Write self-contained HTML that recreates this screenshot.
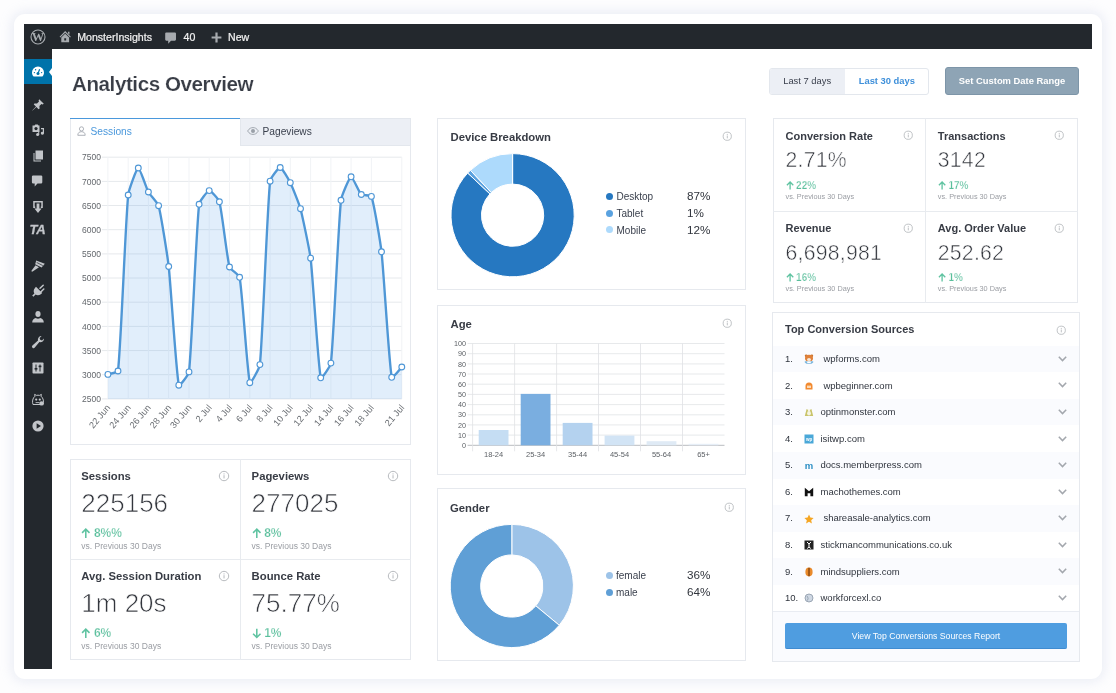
<!DOCTYPE html>
<html><head><meta charset="utf-8"><title>Analytics Overview</title>
<style>
html,body{margin:0;padding:0}
body{width:1116px;height:693px;overflow:hidden;background:#fdfdfe;font-family:'Liberation Sans', 'DejaVu Sans', sans-serif;position:relative;color:#393f4c}
.abs{position:absolute}
svg{display:block;overflow:visible}
svg text{font-family:'Liberation Sans', 'DejaVu Sans', sans-serif}
#card{left:14px;top:14px;width:1088px;height:665px;border-radius:11px;background:#fff;box-shadow:0 0 12px 2px rgba(228,231,243,0.8)}
#app{left:24px;top:24px;width:1068px;height:644px;background:#fff;overflow:hidden}
#topbar{left:24px;top:24px;width:1068px;height:25px;background:#23282d}
#side{left:24px;top:49px;width:28px;height:619.6px;background:#23282d}
#active{left:24px;top:59px;width:28px;height:25px;background:#0073aa}
.tb{color:#f1f1f1;font-size:10.6px;top:30.9px;white-space:nowrap;-webkit-text-stroke:0.22px #f1f1f1}
h1{margin:0;left:72px;top:72px;font-size:20.6px;font-weight:bold;color:#393d46;white-space:nowrap;letter-spacing:-0.43px;-webkit-text-stroke:0.15px #fff}
.panel{border:1px solid #e6e9ee;background:#fff;box-sizing:border-box}
.pt{font-size:11.3px;font-weight:bold;color:#383c45;white-space:nowrap}
.lbl{font-weight:bold;color:#383c45;white-space:nowrap}
.num{color:#33363d;white-space:nowrap;-webkit-text-stroke:0.55px #fff}
.dl{font-weight:bold;color:#5abf9c;white-space:nowrap;-webkit-text-stroke:0.25px #fff}
.dl .ar{display:inline-block;width:11px;font-weight:bold}
.vs{color:#9a9da3;white-space:nowrap}
.row{font-size:9.5px;color:#30353e;white-space:nowrap}
.lg{font-size:10px;color:#393f4c;white-space:nowrap}
.lgp{font-size:11.7px;color:#30343c;white-space:nowrap}
.dot{width:7px;height:7px;border-radius:50%}
.vline{width:1px;background:#e8ebef}
.hline{height:1px;background:#e8ebef}
</style></head><body>
<div id="root" class="abs" style="left:0;top:0;width:1116px;height:693px;will-change:transform">
<div id="card" class="abs"></div>
<div id="topbar" class="abs"></div>
<div id="side" class="abs"></div>
<div id="active" class="abs"></div>
<div class="abs" style="left:48.5px;top:67.5px;width:0;height:0;border:4px solid transparent;border-right:3.5px solid #fff;border-left-width:0"></div>

<!-- topbar -->
<svg class="abs" style="left:29.7px;top:29.1px" width="16" height="16" viewBox="0 0 16 16"><circle cx="8" cy="8" r="7" fill="none" stroke="#a7abaf" stroke-width="1.1"/><text x="8" y="12.3" style="font-family:'Liberation Serif',serif;font-weight:bold;font-size:12.5px" text-anchor="middle" fill="#a7abaf">W</text></svg>
<svg class="abs" style="left:58.7px;top:30.3px" width="12.4" height="13.4" viewBox="0 0 13 13" preserveAspectRatio="none"><path d="M6.5 1 L12.4 6.6 L11.6 7.4 L6.5 2.7 L1.4 7.4 L0.6 6.6 Z" fill="#a7abaf"/><path d="M9.4 1.6 h1.6 v3 l-1.6-1.5z" fill="#a7abaf"/><path d="M2.4 7.4 L6.5 3.7 L10.6 7.4 V12 H2.4 Z M5.5 8 v2.2 h2 V8z" fill="#a7abaf" fill-rule="evenodd"/></svg>
<div class="abs tb" style="left:77.2px">MonsterInsights</div>
<svg class="abs" style="left:165.4px;top:31.6px" width="11.4" height="12" viewBox="0 0 11.4 12"><path d="M1.3 0.5 h8.6 a1.1 1.1 0 0 1 1.1 1.1 v6 a1.1 1.1 0 0 1 -1.1 1.1 h-3.9 l-2.8 3.1 v-3.1 h-1.9 a1.1 1.1 0 0 1 -1.1 -1.1 v-6 a1.1 1.1 0 0 1 1.1 -1.1z" fill="#a7abaf"/></svg>
<div class="abs tb" style="left:183.5px">40</div>
<svg class="abs" style="left:210.6px;top:32.2px" width="11" height="11" viewBox="0 0 11 11"><path d="M4.4 0.6 h2.2 v3.8 h3.8 v2.2 h-3.8 v3.8 h-2.2 v-3.8 h-3.8 v-2.2 h3.8z" fill="#a7abaf"/></svg>
<div class="abs tb" style="left:228px">New</div>

<svg class="abs" style="left:31.0px;top:64.5px" width="14" height="14" viewBox="0 0 14 14"><path d="M7 1.5 A6 6 0 0 0 1 7.5 c0 1.6 0.6 3 1.6 4 h8.8 c1-1 1.6-2.4 1.6-4 A6 6 0 0 0 7 1.5z" fill="#fff"/><circle cx="7" cy="8.6" r="1.5" fill="#0073aa"/><path d="M7 8.6 L8.6 4.2" stroke="#0073aa" stroke-width="1.2"/><circle cx="3.4" cy="7.6" r="0.7" fill="#0073aa"/><circle cx="4.6" cy="4.8" r="0.7" fill="#0073aa"/><circle cx="10.6" cy="7.6" r="0.7" fill="#0073aa"/></svg>
<svg class="abs" style="left:31.0px;top:97.5px" width="14" height="14" viewBox="0 0 14 14"><path d="M8.2 1.2 L12.8 5.8 L11.6 6.4 L10.4 6 L8.4 8 L8.6 10.6 L7.6 11.2 L5.4 9 L1.6 12.6 L1.2 12.4 L5 8.6 L2.8 6.4 L3.4 5.4 L6 5.6 L8 3.6 L7.6 2.4 Z" fill="#c2c5c9"/></svg>
<svg class="abs" style="left:31.0px;top:123.0px" width="14" height="14" viewBox="0 0 14 14"><path d="M1.5 2.5 h2 l0.8-1 h2.4 l0.8 1 h1 v6.5 h-7z" fill="#c2c5c9"/><circle cx="5" cy="5.6" r="1.6" fill="#23282d"/><path d="M10 5 h3 v5.2 a1.6 1.4 0 1 1 -1.2 -1.3 v-2.7 h-1.8z" fill="#c2c5c9"/><circle cx="6.6" cy="11.6" r="1.5" fill="#c2c5c9"/><rect x="7.2" y="9" width="1" height="2.8" fill="#c2c5c9"/></svg>
<svg class="abs" style="left:31.0px;top:148.5px" width="14" height="14" viewBox="0 0 14 14"><path d="M4.5 1.5 h7.5 v9 h-7.5z" fill="#c2c5c9"/><path d="M2.5 4 h1 v7.5 h6.5 v1 h-7.5z" fill="#c2c5c9"/></svg>
<svg class="abs" style="left:31.0px;top:174.3px" width="14" height="14" viewBox="0 0 14 14"><path transform="translate(-0.9 0)" d="M3 1.4 h8 a1.2 1.2 0 0 1 1.2 1.2 v5.6 a1.2 1.2 0 0 1 -1.2 1.2 h-3.6 l-2.8 3.2 v-3.2 h-1.6 a1.2 1.2 0 0 1 -1.2 -1.2 v-5.6 a1.2 1.2 0 0 1 1.2 -1.2z" fill="#c2c5c9"/></svg>
<svg class="abs" style="left:31.0px;top:199.5px" width="14" height="14" viewBox="0 0 14 14"><path d="M2.2 0.9 h9.6 v7 h-2 v-1.5 h0.5 v-4 h-6.6 v4 h0.5 v1.5 h-2z" fill="#c2c5c9"/><path d="M5.6 3.6 h2.8 v5 h2.2 l-3.6 4.4 l-3.6-4.4 h2.2z" fill="#c2c5c9"/></svg>
<div class="abs" style="left:29.6px;top:222.3px;font:italic bold 13px 'Liberation Sans', 'DejaVu Sans', sans-serif;color:#c2c5c9;letter-spacing:-0.2px;-webkit-text-stroke:0.3px #c2c5c9">TA</div>
<svg class="abs" style="left:30.6px;top:259.6px" width="14" height="12" viewBox="0 0 14 12"><path d="M5.2 0.6 L13.8 3.8 L10.6 7.6 L4.2 4.2 Z" fill="#c2c5c9"/><path d="M5.6 2.4 L11.8 5.6" stroke="#23282d" stroke-width="0.7"/><path d="M4.6 5.2 L8 7.2 L1.6 11.6 C0.8 12 0.1 11.3 0.6 10.6 Z" fill="#c2c5c9"/></svg>
<svg class="abs" style="left:31.0px;top:284.0px" width="14" height="14" viewBox="0 0 14 14"><path d="M12.2 1.2 L9 4.2 M12.8 5 L9.8 8" stroke="#c2c5c9" stroke-width="1.5" stroke-linecap="round"/><path d="M5 2.8 L11.2 9 L9.8 10.2 C8.2 11.6 6 11.6 4.6 10.6 L2.4 12.8 L1.2 11.6 L3.4 9.4 C2.4 8 2.4 5.8 3.8 4.2z" fill="#c2c5c9"/></svg>
<svg class="abs" style="left:31.0px;top:309.5px" width="14" height="14" viewBox="0 0 14 14"><ellipse cx="7" cy="4" rx="2.6" ry="3" fill="#c2c5c9"/><path d="M1.2 12.6 c0-2.8 1.6-4 3.6-4.6 c1.2 1 3.2 1 4.4 0 c2 0.6 3.6 1.8 3.6 4.6z" fill="#c2c5c9"/></svg>
<svg class="abs" style="left:31.0px;top:335.0px" width="14" height="14" viewBox="0 0 14 14"><path d="M13 3.4 a3.6 3.6 0 0 1 -4.6 3.6 L3.8 12.6 a1.6 1.6 0 0 1 -2.4 -2.2 L7 5.6 a3.6 3.6 0 0 1 3.6 -4.6 L8.6 3 L9.2 4.8 L11 5.4z" fill="#c2c5c9"/></svg>
<svg class="abs" style="left:31.0px;top:360.5px" width="14" height="14" viewBox="0 0 14 14"><rect x="1.5" y="1.5" width="11" height="11" rx="0.8" fill="#c2c5c9"/><path d="M5 3.5 v7 M9 3.5 v7" stroke="#23282d" stroke-width="1"/><rect x="3.6" y="7" width="2.8" height="1.6" fill="#23282d"/><rect x="7.6" y="4.6" width="2.8" height="1.6" fill="#23282d"/></svg>
<svg class="abs" style="left:30.5px;top:392.5px" width="15" height="15" viewBox="0 0 15 15"><path d="M2 11.5 C1 9 1.5 5 4 3.2 L3.6 1.4 L5.6 2.4 C6.5 2.1 7.5 2.1 8.4 2.4 L10.4 1.4 L10 3.2 C12.5 5 13 9 12 11.5z" fill="none" stroke="#c2c5c9" stroke-width="1"/><circle cx="5.2" cy="6.6" r="1.1" fill="#c2c5c9"/><circle cx="8.8" cy="6.6" r="1.1" fill="#c2c5c9"/><circle cx="10.6" cy="10.4" r="2.2" fill="#c2c5c9"/><path d="M4.6 9.6 h4" stroke="#c2c5c9" stroke-width="0.9"/></svg>
<svg class="abs" style="left:31.0px;top:419.0px" width="14" height="14" viewBox="0 0 14 14"><circle cx="7" cy="7" r="5.6" fill="#c2c5c9"/><path d="M5.6 4.2 L10 7 L5.6 9.8z" fill="#23282d"/></svg>

<h1 class="abs">Analytics Overview</h1>

<!-- date buttons -->
<div class="abs" style="left:769px;top:67.8px;width:160px;height:27px;box-sizing:border-box;border:1px solid #e3e7ed;border-radius:3px;background:#fff"></div>
<div class="abs" style="left:770px;top:68.8px;width:75px;height:25px;background:#eceff5;border-radius:2px 0 0 2px"></div>
<div class="abs" style="left:783.2px;top:75.2px;font-size:9.4px;color:#393f4c;white-space:nowrap">Last 7 days</div>
<div class="abs" style="left:858.7px;top:75.2px;font-size:9.4px;font-weight:bold;color:#3f90da;white-space:nowrap">Last 30 days</div>
<div class="abs" style="left:945px;top:67.3px;width:134px;height:27.5px;box-sizing:border-box;background:#8ea4b5;border:1px solid #7d95a8;border-radius:3px"></div>
<div class="abs" style="left:945px;top:75.2px;width:134px;text-align:center;font-size:9.4px;font-weight:bold;color:#fff;white-space:nowrap">Set Custom Date Range</div>

<!-- line chart panel -->
<div class="abs panel" style="left:70px;top:118px;width:341px;height:327px"></div>
<div class="abs" style="left:240px;top:118px;width:171px;height:28px;box-sizing:border-box;background:#eceff5;border:1px solid #e3e7ed"></div>
<div class="abs" style="left:70px;top:117.5px;width:170px;height:1.5px;background:#4a98dc"></div>
<svg class="abs" style="left:77px;top:126px" width="9" height="10" viewBox="0 0 9 10"><circle cx="4.5" cy="2.9" r="2.1" fill="none" stroke="#9aa0a8" stroke-width="0.8"/><path d="M0.8 9.3 c0-2.4 1.4-3.6 3.7-3.6 s3.7 1.2 3.7 3.6z" fill="none" stroke="#9aa0a8" stroke-width="0.8"/></svg>
<div class="abs" style="left:90.5px;top:125.5px;font-size:10.2px;color:#4a98dc;white-space:nowrap">Sessions</div>
<svg class="abs" style="left:246.5px;top:127px" width="12" height="8" viewBox="0 0 12 8"><path d="M0.6 4 C2.4 1.2 4.2 0.6 6 0.6 S9.6 1.2 11.4 4 C9.6 6.8 7.8 7.4 6 7.4 S2.4 6.8 0.6 4z" fill="none" stroke="#9aa0a8" stroke-width="0.9"/><circle cx="6" cy="4" r="2" fill="#9aa0a8"/></svg>
<div class="abs" style="left:262.5px;top:125.5px;font-size:10.2px;color:#393f4c;white-space:nowrap">Pageviews</div>
<svg class="abs" style="left:0;top:0" width="1116" height="693" viewBox="0 0 1116 693">
<line x1="101.9" y1="398.9" x2="401.8" y2="398.9" stroke="#e6e9ec" stroke-width="1"/>
<text x="100.9" y="402.1" text-anchor="end" font-size="8.5" fill="#63676c">2500</text>
<line x1="101.9" y1="374.7" x2="401.8" y2="374.7" stroke="#e6e9ec" stroke-width="1"/>
<text x="100.9" y="377.9" text-anchor="end" font-size="8.5" fill="#63676c">3000</text>
<line x1="101.9" y1="350.6" x2="401.8" y2="350.6" stroke="#e6e9ec" stroke-width="1"/>
<text x="100.9" y="353.8" text-anchor="end" font-size="8.5" fill="#63676c">3500</text>
<line x1="101.9" y1="326.4" x2="401.8" y2="326.4" stroke="#e6e9ec" stroke-width="1"/>
<text x="100.9" y="329.6" text-anchor="end" font-size="8.5" fill="#63676c">4000</text>
<line x1="101.9" y1="302.2" x2="401.8" y2="302.2" stroke="#e6e9ec" stroke-width="1"/>
<text x="100.9" y="305.4" text-anchor="end" font-size="8.5" fill="#63676c">4500</text>
<line x1="101.9" y1="278.0" x2="401.8" y2="278.0" stroke="#e6e9ec" stroke-width="1"/>
<text x="100.9" y="281.2" text-anchor="end" font-size="8.5" fill="#63676c">5000</text>
<line x1="101.9" y1="253.9" x2="401.8" y2="253.9" stroke="#e6e9ec" stroke-width="1"/>
<text x="100.9" y="257.1" text-anchor="end" font-size="8.5" fill="#63676c">5500</text>
<line x1="101.9" y1="229.7" x2="401.8" y2="229.7" stroke="#e6e9ec" stroke-width="1"/>
<text x="100.9" y="232.9" text-anchor="end" font-size="8.5" fill="#63676c">6000</text>
<line x1="101.9" y1="205.5" x2="401.8" y2="205.5" stroke="#e6e9ec" stroke-width="1"/>
<text x="100.9" y="208.7" text-anchor="end" font-size="8.5" fill="#63676c">6500</text>
<line x1="101.9" y1="181.4" x2="401.8" y2="181.4" stroke="#e6e9ec" stroke-width="1"/>
<text x="100.9" y="184.6" text-anchor="end" font-size="8.5" fill="#63676c">7000</text>
<line x1="101.9" y1="157.2" x2="401.8" y2="157.2" stroke="#e6e9ec" stroke-width="1"/>
<text x="100.9" y="160.4" text-anchor="end" font-size="8.5" fill="#63676c">7500</text>
<line x1="107.9" y1="157.2" x2="107.9" y2="398.9" stroke="#f1f3f6" stroke-width="1"/>
<line x1="128.2" y1="157.2" x2="128.2" y2="398.9" stroke="#f1f3f6" stroke-width="1"/>
<line x1="148.4" y1="157.2" x2="148.4" y2="398.9" stroke="#f1f3f6" stroke-width="1"/>
<line x1="168.7" y1="157.2" x2="168.7" y2="398.9" stroke="#f1f3f6" stroke-width="1"/>
<line x1="189.0" y1="157.2" x2="189.0" y2="398.9" stroke="#f1f3f6" stroke-width="1"/>
<line x1="209.2" y1="157.2" x2="209.2" y2="398.9" stroke="#f1f3f6" stroke-width="1"/>
<line x1="229.5" y1="157.2" x2="229.5" y2="398.9" stroke="#f1f3f6" stroke-width="1"/>
<line x1="249.8" y1="157.2" x2="249.8" y2="398.9" stroke="#f1f3f6" stroke-width="1"/>
<line x1="270.1" y1="157.2" x2="270.1" y2="398.9" stroke="#f1f3f6" stroke-width="1"/>
<line x1="290.3" y1="157.2" x2="290.3" y2="398.9" stroke="#f1f3f6" stroke-width="1"/>
<line x1="310.6" y1="157.2" x2="310.6" y2="398.9" stroke="#f1f3f6" stroke-width="1"/>
<line x1="330.9" y1="157.2" x2="330.9" y2="398.9" stroke="#f1f3f6" stroke-width="1"/>
<line x1="351.1" y1="157.2" x2="351.1" y2="398.9" stroke="#f1f3f6" stroke-width="1"/>
<line x1="371.4" y1="157.2" x2="371.4" y2="398.9" stroke="#f1f3f6" stroke-width="1"/>
<line x1="401.8" y1="157.2" x2="401.8" y2="398.9" stroke="#f1f3f6" stroke-width="1"/>
<path d="M107.9,374.4 C109.5,373.8 117.8,372.6 118.0,371.0 C121.1,343.9 125.4,222.9 128.2,195.0 C128.6,190.4 136.6,168.2 138.3,168.0 C139.8,167.8 146.5,188.4 148.4,192.0 C149.7,194.4 157.9,203.1 158.6,205.7 C161.1,215.1 167.6,256.8 168.7,266.5 C170.8,285.5 176.0,370.4 178.8,385.2 C179.2,387.2 188.7,374.5 189.0,371.9 C191.9,345.6 196.2,230.6 199.1,204.3 C199.4,201.6 207.5,190.8 209.2,190.6 C210.8,190.4 218.8,199.5 219.4,201.8 C222.0,211.8 226.9,257.1 229.5,267.0 C230.1,269.2 239.3,275.1 239.6,277.3 C242.5,293.6 247.1,371.0 249.8,382.7 C250.3,385.0 259.6,367.9 259.9,364.6 C262.8,335.6 267.1,210.1 270.1,181.2 C270.3,178.5 278.6,167.4 280.2,167.5 C281.9,167.6 289.0,180.1 290.3,182.7 C292.3,186.7 299.3,204.4 300.5,208.7 C302.5,216.5 309.6,250.2 310.6,258.2 C312.9,277.2 317.9,363.2 320.7,377.8 C321.1,380.0 330.5,365.9 330.9,363.1 C333.8,337.5 338.2,226.1 341.0,200.3 C341.4,196.3 349.3,177.3 351.1,176.8 C352.6,176.4 359.1,192.4 361.3,194.5 C362.4,195.5 370.9,195.0 371.4,196.4 C374.1,204.2 380.5,242.9 381.5,251.8 C383.8,271.8 388.8,360.8 391.7,377.3 C392.0,379.2 400.2,368.7 401.8,367.0 L401.8,398.9 L107.9,398.9 Z" fill="#4f9de6" fill-opacity="0.17" stroke="none"/>
<path d="M107.9,374.4 C109.5,373.8 117.8,372.6 118.0,371.0 C121.1,343.9 125.4,222.9 128.2,195.0 C128.6,190.4 136.6,168.2 138.3,168.0 C139.8,167.8 146.5,188.4 148.4,192.0 C149.7,194.4 157.9,203.1 158.6,205.7 C161.1,215.1 167.6,256.8 168.7,266.5 C170.8,285.5 176.0,370.4 178.8,385.2 C179.2,387.2 188.7,374.5 189.0,371.9 C191.9,345.6 196.2,230.6 199.1,204.3 C199.4,201.6 207.5,190.8 209.2,190.6 C210.8,190.4 218.8,199.5 219.4,201.8 C222.0,211.8 226.9,257.1 229.5,267.0 C230.1,269.2 239.3,275.1 239.6,277.3 C242.5,293.6 247.1,371.0 249.8,382.7 C250.3,385.0 259.6,367.9 259.9,364.6 C262.8,335.6 267.1,210.1 270.1,181.2 C270.3,178.5 278.6,167.4 280.2,167.5 C281.9,167.6 289.0,180.1 290.3,182.7 C292.3,186.7 299.3,204.4 300.5,208.7 C302.5,216.5 309.6,250.2 310.6,258.2 C312.9,277.2 317.9,363.2 320.7,377.8 C321.1,380.0 330.5,365.9 330.9,363.1 C333.8,337.5 338.2,226.1 341.0,200.3 C341.4,196.3 349.3,177.3 351.1,176.8 C352.6,176.4 359.1,192.4 361.3,194.5 C362.4,195.5 370.9,195.0 371.4,196.4 C374.1,204.2 380.5,242.9 381.5,251.8 C383.8,271.8 388.8,360.8 391.7,377.3 C392.0,379.2 400.2,368.7 401.8,367.0" fill="none" stroke="#4f97d6" stroke-width="2.35" stroke-linejoin="round" stroke-linecap="round"/>
<circle cx="107.9" cy="374.4" r="2.9" fill="#fff" stroke="#4f97d6" stroke-width="1.1"/>
<circle cx="118.0" cy="371.0" r="2.9" fill="#fff" stroke="#4f97d6" stroke-width="1.1"/>
<circle cx="128.2" cy="195.0" r="2.9" fill="#fff" stroke="#4f97d6" stroke-width="1.1"/>
<circle cx="138.3" cy="168.0" r="2.9" fill="#fff" stroke="#4f97d6" stroke-width="1.1"/>
<circle cx="148.4" cy="192.0" r="2.9" fill="#fff" stroke="#4f97d6" stroke-width="1.1"/>
<circle cx="158.6" cy="205.7" r="2.9" fill="#fff" stroke="#4f97d6" stroke-width="1.1"/>
<circle cx="168.7" cy="266.5" r="2.9" fill="#fff" stroke="#4f97d6" stroke-width="1.1"/>
<circle cx="178.8" cy="385.2" r="2.9" fill="#fff" stroke="#4f97d6" stroke-width="1.1"/>
<circle cx="189.0" cy="371.9" r="2.9" fill="#fff" stroke="#4f97d6" stroke-width="1.1"/>
<circle cx="199.1" cy="204.3" r="2.9" fill="#fff" stroke="#4f97d6" stroke-width="1.1"/>
<circle cx="209.2" cy="190.6" r="2.9" fill="#fff" stroke="#4f97d6" stroke-width="1.1"/>
<circle cx="219.4" cy="201.8" r="2.9" fill="#fff" stroke="#4f97d6" stroke-width="1.1"/>
<circle cx="229.5" cy="267.0" r="2.9" fill="#fff" stroke="#4f97d6" stroke-width="1.1"/>
<circle cx="239.6" cy="277.3" r="2.9" fill="#fff" stroke="#4f97d6" stroke-width="1.1"/>
<circle cx="249.8" cy="382.7" r="2.9" fill="#fff" stroke="#4f97d6" stroke-width="1.1"/>
<circle cx="259.9" cy="364.6" r="2.9" fill="#fff" stroke="#4f97d6" stroke-width="1.1"/>
<circle cx="270.1" cy="181.2" r="2.9" fill="#fff" stroke="#4f97d6" stroke-width="1.1"/>
<circle cx="280.2" cy="167.5" r="2.9" fill="#fff" stroke="#4f97d6" stroke-width="1.1"/>
<circle cx="290.3" cy="182.7" r="2.9" fill="#fff" stroke="#4f97d6" stroke-width="1.1"/>
<circle cx="300.5" cy="208.7" r="2.9" fill="#fff" stroke="#4f97d6" stroke-width="1.1"/>
<circle cx="310.6" cy="258.2" r="2.9" fill="#fff" stroke="#4f97d6" stroke-width="1.1"/>
<circle cx="320.7" cy="377.8" r="2.9" fill="#fff" stroke="#4f97d6" stroke-width="1.1"/>
<circle cx="330.9" cy="363.1" r="2.9" fill="#fff" stroke="#4f97d6" stroke-width="1.1"/>
<circle cx="341.0" cy="200.3" r="2.9" fill="#fff" stroke="#4f97d6" stroke-width="1.1"/>
<circle cx="351.1" cy="176.8" r="2.9" fill="#fff" stroke="#4f97d6" stroke-width="1.1"/>
<circle cx="361.3" cy="194.5" r="2.9" fill="#fff" stroke="#4f97d6" stroke-width="1.1"/>
<circle cx="371.4" cy="196.4" r="2.9" fill="#fff" stroke="#4f97d6" stroke-width="1.1"/>
<circle cx="381.5" cy="251.8" r="2.9" fill="#fff" stroke="#4f97d6" stroke-width="1.1"/>
<circle cx="391.7" cy="377.3" r="2.9" fill="#fff" stroke="#4f97d6" stroke-width="1.1"/>
<circle cx="401.8" cy="367.0" r="2.9" fill="#fff" stroke="#4f97d6" stroke-width="1.1"/>
<text transform="translate(110.9,407.9) rotate(-50)" text-anchor="end" font-size="9.2" fill="#6b6f74">22 Jun</text>
<text transform="translate(131.2,407.9) rotate(-50)" text-anchor="end" font-size="9.2" fill="#6b6f74">24 Jun</text>
<text transform="translate(151.4,407.9) rotate(-50)" text-anchor="end" font-size="9.2" fill="#6b6f74">26 Jun</text>
<text transform="translate(171.7,407.9) rotate(-50)" text-anchor="end" font-size="9.2" fill="#6b6f74">28 Jun</text>
<text transform="translate(192.0,407.9) rotate(-50)" text-anchor="end" font-size="9.2" fill="#6b6f74">30 Jun</text>
<text transform="translate(212.2,407.9) rotate(-50)" text-anchor="end" font-size="9.2" fill="#6b6f74">2 Jul</text>
<text transform="translate(232.5,407.9) rotate(-50)" text-anchor="end" font-size="9.2" fill="#6b6f74">4 Jul</text>
<text transform="translate(252.8,407.9) rotate(-50)" text-anchor="end" font-size="9.2" fill="#6b6f74">6 Jul</text>
<text transform="translate(273.1,407.9) rotate(-50)" text-anchor="end" font-size="9.2" fill="#6b6f74">8 Jul</text>
<text transform="translate(293.3,407.9) rotate(-50)" text-anchor="end" font-size="9.2" fill="#6b6f74">10 Jul</text>
<text transform="translate(313.6,407.9) rotate(-50)" text-anchor="end" font-size="9.2" fill="#6b6f74">12 Jul</text>
<text transform="translate(333.9,407.9) rotate(-50)" text-anchor="end" font-size="9.2" fill="#6b6f74">14 Jul</text>
<text transform="translate(354.1,407.9) rotate(-50)" text-anchor="end" font-size="9.2" fill="#6b6f74">16 Jul</text>
<text transform="translate(374.4,407.9) rotate(-50)" text-anchor="end" font-size="9.2" fill="#6b6f74">18 Jul</text>
<text transform="translate(404.8,407.9) rotate(-50)" text-anchor="end" font-size="9.2" fill="#6b6f74">21 Jul</text>
</svg>

<!-- left stats -->
<div class="abs panel" style="left:70px;top:459px;width:341px;height:201px"></div>
<div class="abs vline" style="left:240px;top:459px;height:201px"></div>
<div class="abs hline" style="left:70px;top:559px;width:341px"></div>
<div class="abs lbl" style="left:81.3px;top:469.50px;font-size:11.3px;line-height:12.99px;">Sessions</div>
<div class="abs num" style="left:81.3px;top:489.45px;font-size:26px;line-height:29.90px;-webkit-text-stroke-width:0.68px;">225156</div>
<div class="abs dl" style="left:81.3px;top:527.10px;font-size:12px;line-height:13.80px;"><svg style="display:inline-block;vertical-align:-1px;margin-right:3.0px" width="9.6" height="10.6" viewBox="0 0 9 10"><path d="M1 4.6 L4.5 1.1 L8 4.6 M4.5 1.4 V9.4" fill="none" stroke="#5fc3a1" stroke-width="1.45" stroke-linejoin="miter"/></svg>8%%</div>
<div class="abs vs" style="left:81.3px;top:541.51px;font-size:8.5px;line-height:9.77px;">vs. Previous 30 Days</div>
<div class="abs lbl" style="left:251.6px;top:469.50px;font-size:11.3px;line-height:12.99px;">Pageviews</div>
<div class="abs num" style="left:251.6px;top:489.45px;font-size:26px;line-height:29.90px;-webkit-text-stroke-width:0.68px;">277025</div>
<div class="abs dl" style="left:251.6px;top:527.10px;font-size:12px;line-height:13.80px;"><svg style="display:inline-block;vertical-align:-1px;margin-right:3.0px" width="9.6" height="10.6" viewBox="0 0 9 10"><path d="M1 4.6 L4.5 1.1 L8 4.6 M4.5 1.4 V9.4" fill="none" stroke="#5fc3a1" stroke-width="1.45" stroke-linejoin="miter"/></svg>8%</div>
<div class="abs vs" style="left:251.6px;top:541.51px;font-size:8.5px;line-height:9.77px;">vs. Previous 30 Days</div>
<div class="abs lbl" style="left:81.3px;top:569.50px;font-size:11.3px;line-height:12.99px;">Avg. Session Duration</div>
<div class="abs num" style="left:81.3px;top:589.45px;font-size:26px;line-height:29.90px;-webkit-text-stroke-width:0.68px;">1m 20s</div>
<div class="abs dl" style="left:81.3px;top:627.10px;font-size:12px;line-height:13.80px;"><svg style="display:inline-block;vertical-align:-1px;margin-right:3.0px" width="9.6" height="10.6" viewBox="0 0 9 10"><path d="M1 4.6 L4.5 1.1 L8 4.6 M4.5 1.4 V9.4" fill="none" stroke="#5fc3a1" stroke-width="1.45" stroke-linejoin="miter"/></svg>6%</div>
<div class="abs vs" style="left:81.3px;top:641.51px;font-size:8.5px;line-height:9.77px;">vs. Previous 30 Days</div>
<div class="abs lbl" style="left:251.6px;top:569.50px;font-size:11.3px;line-height:12.99px;">Bounce Rate</div>
<div class="abs num" style="left:251.6px;top:589.45px;font-size:26px;line-height:29.90px;-webkit-text-stroke-width:0.68px;">75.77%</div>
<div class="abs dl" style="left:251.6px;top:627.10px;font-size:12px;line-height:13.80px;"><svg style="display:inline-block;vertical-align:-1px;margin-right:3.0px" width="9.6" height="10.6" viewBox="0 0 9 10"><path transform="rotate(180 4.5 5)" d="M1 4.6 L4.5 1.1 L8 4.6 M4.5 1.4 V9.4" fill="none" stroke="#5fc3a1" stroke-width="1.45" stroke-linejoin="miter"/></svg>1%</div>
<div class="abs vs" style="left:251.6px;top:641.51px;font-size:8.5px;line-height:9.77px;">vs. Previous 30 Days</div>
<svg class="abs" style="left:217.97px;top:469.97px" width="12.05" height="12.05" viewBox="0 0 10 10"><circle cx="5" cy="5" r="3.9" fill="none" stroke="#b4b7bb" stroke-width="0.8"/><rect x="4.6" y="4.3" width="0.8" height="2.7" fill="#b4b7bb"/><rect x="4.6" y="2.8" width="0.8" height="0.9" fill="#b4b7bb"/></svg><svg class="abs" style="left:387.47px;top:469.97px" width="12.05" height="12.05" viewBox="0 0 10 10"><circle cx="5" cy="5" r="3.9" fill="none" stroke="#b4b7bb" stroke-width="0.8"/><rect x="4.6" y="4.3" width="0.8" height="2.7" fill="#b4b7bb"/><rect x="4.6" y="2.8" width="0.8" height="0.9" fill="#b4b7bb"/></svg><svg class="abs" style="left:217.97px;top:569.97px" width="12.05" height="12.05" viewBox="0 0 10 10"><circle cx="5" cy="5" r="3.9" fill="none" stroke="#b4b7bb" stroke-width="0.8"/><rect x="4.6" y="4.3" width="0.8" height="2.7" fill="#b4b7bb"/><rect x="4.6" y="2.8" width="0.8" height="0.9" fill="#b4b7bb"/></svg><svg class="abs" style="left:387.47px;top:569.97px" width="12.05" height="12.05" viewBox="0 0 10 10"><circle cx="5" cy="5" r="3.9" fill="none" stroke="#b4b7bb" stroke-width="0.8"/><rect x="4.6" y="4.3" width="0.8" height="2.7" fill="#b4b7bb"/><rect x="4.6" y="2.8" width="0.8" height="0.9" fill="#b4b7bb"/></svg>

<!-- device breakdown -->
<div class="abs panel" style="left:437px;top:118px;width:309px;height:172px"></div>
<div class="abs pt" style="left:450.5px;top:130.5px">Device Breakdown</div>
<svg class="abs" style="left:722.24px;top:131.24px" width="10.51" height="10.51" viewBox="0 0 10 10"><circle cx="5" cy="5" r="3.9" fill="none" stroke="#b4b7bb" stroke-width="0.8"/><rect x="4.6" y="4.3" width="0.8" height="2.7" fill="#b4b7bb"/><rect x="4.6" y="2.8" width="0.8" height="0.9" fill="#b4b7bb"/></svg>
<svg class="abs" style="left:0;top:0" width="1116" height="693" viewBox="0 0 1116 693">
<path d="M512.60,153.60 A61.6,61.6 0 1 1 467.70,173.03 L489.93,193.91 A31.1,31.1 0 1 0 512.60,184.10 Z" fill="#2678c1" stroke="#fff" stroke-width="1"/>
<path d="M467.70,173.03 A61.6,61.6 0 0 1 470.43,170.30 L491.31,192.53 A31.1,31.1 0 0 0 489.93,193.91 Z" fill="#5aa2e0" stroke="#fff" stroke-width="1"/>
<path d="M470.43,170.30 A61.6,61.6 0 0 1 512.60,153.60 L512.60,184.10 A31.1,31.1 0 0 0 491.31,192.53 Z" fill="#addafc" stroke="#fff" stroke-width="1"/>
</svg>
<div class="abs dot" style="left:605.9px;top:192.90px;background:#2678c1"></div><div class="abs lg" style="left:616.5px;top:191.30px">Desktop</div><div class="abs lgp" style="left:687px;top:189.00px">87%</div>
<div class="abs dot" style="left:605.9px;top:209.65px;background:#5aa2e0"></div><div class="abs lg" style="left:616.5px;top:208.05px">Tablet</div><div class="abs lgp" style="left:687px;top:205.75px">1%</div>
<div class="abs dot" style="left:605.9px;top:226.40px;background:#addafc"></div><div class="abs lg" style="left:616.5px;top:224.80px">Mobile</div><div class="abs lgp" style="left:687px;top:222.50px">12%</div>

<!-- age -->
<div class="abs panel" style="left:437px;top:305px;width:309px;height:170px"></div>
<div class="abs pt" style="left:450.5px;top:317.5px">Age</div>
<svg class="abs" style="left:722.24px;top:317.74px" width="10.51" height="10.51" viewBox="0 0 10 10"><circle cx="5" cy="5" r="3.9" fill="none" stroke="#b4b7bb" stroke-width="0.8"/><rect x="4.6" y="4.3" width="0.8" height="2.7" fill="#b4b7bb"/><rect x="4.6" y="2.8" width="0.8" height="0.9" fill="#b4b7bb"/></svg>
<svg class="abs" style="left:0;top:0" width="1116" height="693" viewBox="0 0 1116 693">
<line x1="467.6" y1="445.3" x2="724.5" y2="445.3" stroke="#b9bcc0" stroke-width="1"/>
<text x="466.1" y="447.9" text-anchor="end" font-size="7.2" fill="#5d6166">0</text>
<line x1="467.6" y1="435.1" x2="724.5" y2="435.1" stroke="#e1e3e6" stroke-width="0.8"/>
<text x="466.1" y="437.7" text-anchor="end" font-size="7.2" fill="#5d6166">10</text>
<line x1="467.6" y1="424.9" x2="724.5" y2="424.9" stroke="#e1e3e6" stroke-width="0.8"/>
<text x="466.1" y="427.5" text-anchor="end" font-size="7.2" fill="#5d6166">20</text>
<line x1="467.6" y1="414.8" x2="724.5" y2="414.8" stroke="#e1e3e6" stroke-width="0.8"/>
<text x="466.1" y="417.4" text-anchor="end" font-size="7.2" fill="#5d6166">30</text>
<line x1="467.6" y1="404.6" x2="724.5" y2="404.6" stroke="#e1e3e6" stroke-width="0.8"/>
<text x="466.1" y="407.2" text-anchor="end" font-size="7.2" fill="#5d6166">40</text>
<line x1="467.6" y1="394.4" x2="724.5" y2="394.4" stroke="#e1e3e6" stroke-width="0.8"/>
<text x="466.1" y="397.0" text-anchor="end" font-size="7.2" fill="#5d6166">50</text>
<line x1="467.6" y1="384.2" x2="724.5" y2="384.2" stroke="#e1e3e6" stroke-width="0.8"/>
<text x="466.1" y="386.8" text-anchor="end" font-size="7.2" fill="#5d6166">60</text>
<line x1="467.6" y1="374.0" x2="724.5" y2="374.0" stroke="#e1e3e6" stroke-width="0.8"/>
<text x="466.1" y="376.6" text-anchor="end" font-size="7.2" fill="#5d6166">70</text>
<line x1="467.6" y1="363.9" x2="724.5" y2="363.9" stroke="#e1e3e6" stroke-width="0.8"/>
<text x="466.1" y="366.5" text-anchor="end" font-size="7.2" fill="#5d6166">80</text>
<line x1="467.6" y1="353.7" x2="724.5" y2="353.7" stroke="#e1e3e6" stroke-width="0.8"/>
<text x="466.1" y="356.3" text-anchor="end" font-size="7.2" fill="#5d6166">90</text>
<line x1="467.6" y1="343.5" x2="724.5" y2="343.5" stroke="#e1e3e6" stroke-width="0.8"/>
<text x="466.1" y="346.1" text-anchor="end" font-size="7.2" fill="#5d6166">100</text>
<line x1="472.6" y1="343.5" x2="472.6" y2="451.3" stroke="#dfe1e4" stroke-width="0.8"/>
<line x1="514.6" y1="343.5" x2="514.6" y2="451.3" stroke="#dfe1e4" stroke-width="0.8"/>
<line x1="556.6" y1="343.5" x2="556.6" y2="451.3" stroke="#dfe1e4" stroke-width="0.8"/>
<line x1="598.5" y1="343.5" x2="598.5" y2="451.3" stroke="#dfe1e4" stroke-width="0.8"/>
<line x1="640.5" y1="343.5" x2="640.5" y2="451.3" stroke="#dfe1e4" stroke-width="0.8"/>
<line x1="682.5" y1="343.5" x2="682.5" y2="451.3" stroke="#dfe1e4" stroke-width="0.8"/>
<rect x="478.7" y="430.0" width="29.8" height="15.3" fill="#c5ddf3"/>
<text x="493.6" y="456.9" text-anchor="middle" font-size="7.5" fill="#5d6166">18-24</text>
<rect x="520.7" y="393.9" width="29.8" height="51.4" fill="#7aaee0"/>
<text x="535.6" y="456.9" text-anchor="middle" font-size="7.5" fill="#5d6166">25-34</text>
<rect x="562.7" y="422.9" width="29.8" height="22.4" fill="#b4d2ef"/>
<text x="577.6" y="456.9" text-anchor="middle" font-size="7.5" fill="#5d6166">35-44</text>
<rect x="604.6" y="435.6" width="29.8" height="9.7" fill="#d2e4f5"/>
<text x="619.5" y="456.9" text-anchor="middle" font-size="7.5" fill="#5d6166">45-54</text>
<rect x="646.6" y="441.2" width="29.8" height="4.1" fill="#dfeaf5"/>
<text x="661.5" y="456.9" text-anchor="middle" font-size="7.5" fill="#5d6166">55-64</text>
<rect x="688.6" y="443.8" width="29.8" height="1.5" fill="#e6eef7"/>
<text x="703.5" y="456.9" text-anchor="middle" font-size="7.5" fill="#5d6166">65+</text>
</svg>

<!-- gender -->
<div class="abs panel" style="left:437px;top:488px;width:309px;height:173px"></div>
<div class="abs pt" style="left:450px;top:501.5px">Gender</div>
<svg class="abs" style="left:724.24px;top:502.24px" width="10.51" height="10.51" viewBox="0 0 10 10"><circle cx="5" cy="5" r="3.9" fill="none" stroke="#b4b7bb" stroke-width="0.8"/><rect x="4.6" y="4.3" width="0.8" height="2.7" fill="#b4b7bb"/><rect x="4.6" y="2.8" width="0.8" height="0.9" fill="#b4b7bb"/></svg>
<svg class="abs" style="left:0;top:0" width="1116" height="693" viewBox="0 0 1116 693">
<path d="M511.80,524.40 A61.6,61.6 0 0 1 559.26,625.27 L535.76,605.82 A31.1,31.1 0 0 0 511.80,554.90 Z" fill="#9dc3e8" stroke="#fff" stroke-width="1"/>
<path d="M559.26,625.27 A61.6,61.6 0 1 1 511.80,524.40 L511.80,554.90 A31.1,31.1 0 1 0 535.76,605.82 Z" fill="#5f9fd6" stroke="#fff" stroke-width="1"/>
</svg>
<div class="abs dot" style="left:605.9px;top:571.90px;background:#9dc3e8"></div><div class="abs lg" style="left:616px;top:570.30px">female</div><div class="abs lgp" style="left:687px;top:568.00px">36%</div>
<div class="abs dot" style="left:605.9px;top:588.65px;background:#5f9fd6"></div><div class="abs lg" style="left:616px;top:587.05px">male</div><div class="abs lgp" style="left:687px;top:584.75px">64%</div>

<!-- ecommerce stats -->
<div class="abs panel" style="left:773px;top:118px;width:305px;height:185px"></div>
<div class="abs vline" style="left:925px;top:118px;height:185px"></div>
<div class="abs hline" style="left:773px;top:211px;width:305px"></div>
<div class="abs lbl" style="left:785.5px;top:129.58px;font-size:11px;line-height:12.65px;">Conversion Rate</div>
<div class="abs num" style="left:785.5px;top:148.31px;font-size:21.2px;line-height:24.38px;-webkit-text-stroke-width:0.5px;letter-spacing:0.25px;">2.71%</div>
<div class="abs dl" style="left:785.5px;top:179.75px;font-size:10px;line-height:11.50px;"><svg style="display:inline-block;vertical-align:-1px;margin-right:2.4px" width="8.2" height="9.2" viewBox="0 0 9 10"><path d="M1 4.6 L4.5 1.1 L8 4.6 M4.5 1.4 V9.4" fill="none" stroke="#5fc3a1" stroke-width="1.45" stroke-linejoin="miter"/></svg>22%</div>
<div class="abs vs" style="left:785.5px;top:192.50px;font-size:7.3px;line-height:8.39px;">vs. Previous 30 Days</div>
<div class="abs lbl" style="left:937.8px;top:129.58px;font-size:11px;line-height:12.65px;">Transactions</div>
<div class="abs num" style="left:937.8px;top:148.31px;font-size:21.2px;line-height:24.38px;-webkit-text-stroke-width:0.5px;letter-spacing:0.25px;">3142</div>
<div class="abs dl" style="left:937.8px;top:179.75px;font-size:10px;line-height:11.50px;"><svg style="display:inline-block;vertical-align:-1px;margin-right:2.4px" width="8.2" height="9.2" viewBox="0 0 9 10"><path d="M1 4.6 L4.5 1.1 L8 4.6 M4.5 1.4 V9.4" fill="none" stroke="#5fc3a1" stroke-width="1.45" stroke-linejoin="miter"/></svg>17%</div>
<div class="abs vs" style="left:937.8px;top:192.50px;font-size:7.3px;line-height:8.39px;">vs. Previous 30 Days</div>
<div class="abs lbl" style="left:785.5px;top:221.88px;font-size:11px;line-height:12.65px;">Revenue</div>
<div class="abs num" style="left:785.5px;top:240.61px;font-size:21.2px;line-height:24.38px;-webkit-text-stroke-width:0.5px;letter-spacing:0.25px;">6,698,981</div>
<div class="abs dl" style="left:785.5px;top:272.05px;font-size:10px;line-height:11.50px;"><svg style="display:inline-block;vertical-align:-1px;margin-right:2.4px" width="8.2" height="9.2" viewBox="0 0 9 10"><path d="M1 4.6 L4.5 1.1 L8 4.6 M4.5 1.4 V9.4" fill="none" stroke="#5fc3a1" stroke-width="1.45" stroke-linejoin="miter"/></svg>16%</div>
<div class="abs vs" style="left:785.5px;top:284.80px;font-size:7.3px;line-height:8.39px;">vs. Previous 30 Days</div>
<div class="abs lbl" style="left:937.8px;top:221.88px;font-size:11px;line-height:12.65px;">Avg. Order Value</div>
<div class="abs num" style="left:937.8px;top:240.61px;font-size:21.2px;line-height:24.38px;-webkit-text-stroke-width:0.5px;letter-spacing:0.25px;">252.62</div>
<div class="abs dl" style="left:937.8px;top:272.05px;font-size:10px;line-height:11.50px;"><svg style="display:inline-block;vertical-align:-1px;margin-right:2.4px" width="8.2" height="9.2" viewBox="0 0 9 10"><path d="M1 4.6 L4.5 1.1 L8 4.6 M4.5 1.4 V9.4" fill="none" stroke="#5fc3a1" stroke-width="1.45" stroke-linejoin="miter"/></svg>1%</div>
<div class="abs vs" style="left:937.8px;top:284.80px;font-size:7.3px;line-height:8.39px;">vs. Previous 30 Days</div>
<svg class="abs" style="left:902.74px;top:130.24px" width="10.51" height="10.51" viewBox="0 0 10 10"><circle cx="5" cy="5" r="3.9" fill="none" stroke="#b4b7bb" stroke-width="0.8"/><rect x="4.6" y="4.3" width="0.8" height="2.7" fill="#b4b7bb"/><rect x="4.6" y="2.8" width="0.8" height="0.9" fill="#b4b7bb"/></svg><svg class="abs" style="left:1054.24px;top:130.24px" width="10.51" height="10.51" viewBox="0 0 10 10"><circle cx="5" cy="5" r="3.9" fill="none" stroke="#b4b7bb" stroke-width="0.8"/><rect x="4.6" y="4.3" width="0.8" height="2.7" fill="#b4b7bb"/><rect x="4.6" y="2.8" width="0.8" height="0.9" fill="#b4b7bb"/></svg><svg class="abs" style="left:902.74px;top:222.74px" width="10.51" height="10.51" viewBox="0 0 10 10"><circle cx="5" cy="5" r="3.9" fill="none" stroke="#b4b7bb" stroke-width="0.8"/><rect x="4.6" y="4.3" width="0.8" height="2.7" fill="#b4b7bb"/><rect x="4.6" y="2.8" width="0.8" height="0.9" fill="#b4b7bb"/></svg><svg class="abs" style="left:1054.24px;top:222.74px" width="10.51" height="10.51" viewBox="0 0 10 10"><circle cx="5" cy="5" r="3.9" fill="none" stroke="#b4b7bb" stroke-width="0.8"/><rect x="4.6" y="4.3" width="0.8" height="2.7" fill="#b4b7bb"/><rect x="4.6" y="2.8" width="0.8" height="0.9" fill="#b4b7bb"/></svg>

<!-- top conversion sources -->
<div class="abs panel" style="left:772px;top:312px;width:308px;height:350px;background:#fff"></div>
<div class="abs" style="left:773px;top:610.5px;width:306px;height:50.5px;background:#fafbfe;border-top:1px solid #e9ecf2;box-sizing:border-box"></div>
<div class="abs pt" style="left:785px;top:323px;font-size:11px">Top Conversion Sources</div>
<svg class="abs" style="left:1056.24px;top:324.74px" width="10.51" height="10.51" viewBox="0 0 10 10"><circle cx="5" cy="5" r="3.9" fill="none" stroke="#b4b7bb" stroke-width="0.8"/><rect x="4.6" y="4.3" width="0.8" height="2.7" fill="#b4b7bb"/><rect x="4.6" y="2.8" width="0.8" height="0.9" fill="#b4b7bb"/></svg>
<div class="abs" style="left:773px;top:345.8px;width:306px;height:26.56px;background:#fafbfe"></div>
<div class="abs row" style="left:785px;top:353.0px">1.</div>
<svg class="abs" style="left:804px;top:354.3px" width="10" height="10" viewBox="0 0 10 10"><circle cx="2.2" cy="1.8" r="1.4" fill="#c9742e"/><circle cx="7.8" cy="1.8" r="1.4" fill="#c9742e"/><ellipse cx="5" cy="4.2" rx="4" ry="3.4" fill="#e0813a"/><ellipse cx="5" cy="5.6" rx="2" ry="1.5" fill="#f6e7d5"/><path d="M0.8 7.2 h8.4 v1.4 l-1.6 1.2 h-5.2 l-1.6-1.2z" fill="#7db7de"/><rect x="3.2" y="7.4" width="3.6" height="1.6" fill="#fff"/></svg>
<div class="abs row" style="left:823.4px;top:353.0px">wpforms.com</div>
<svg class="abs" style="left:1058px;top:355.8px" width="9" height="6" viewBox="0 0 9 6"><path d="M0.8 0.8 L4.5 4.6 L8.2 0.8" fill="none" stroke="#a3a7ad" stroke-width="1.5"/></svg>
<div class="abs" style="left:773px;top:372.4px;width:306px;height:26.56px;background:#fff"></div>
<div class="abs row" style="left:785px;top:379.6px">2.</div>
<svg class="abs" style="left:804px;top:380.9px" width="10" height="10" viewBox="0 0 10 10"><path d="M1.5 5 a3.5 3.5 0 0 1 7 0 v3.5 h-7z" fill="#f28a30"/><rect x="3" y="4.6" width="4" height="2.4" fill="#fbd9b5"/></svg>
<div class="abs row" style="left:823.4px;top:379.6px">wpbeginner.com</div>
<svg class="abs" style="left:1058px;top:382.4px" width="9" height="6" viewBox="0 0 9 6"><path d="M0.8 0.8 L4.5 4.6 L8.2 0.8" fill="none" stroke="#a3a7ad" stroke-width="1.5"/></svg>
<div class="abs" style="left:773px;top:398.9px;width:306px;height:26.56px;background:#fafbfe"></div>
<div class="abs row" style="left:785px;top:406.1px">3.</div>
<svg class="abs" style="left:804px;top:407.4px" width="10" height="10" viewBox="0 0 10 10"><path d="M0.8 9 L2.6 2 L5 3.6 L7.4 2 L9.2 9 Z" fill="#c9c46a"/><ellipse cx="5" cy="6.2" rx="1.9" ry="2.2" fill="#f6f4e2"/><circle cx="5" cy="3.4" r="1.1" fill="#f6f4e2"/></svg>
<div class="abs row" style="left:820.5px;top:406.1px">optinmonster.com</div>
<svg class="abs" style="left:1058px;top:408.9px" width="9" height="6" viewBox="0 0 9 6"><path d="M0.8 0.8 L4.5 4.6 L8.2 0.8" fill="none" stroke="#a3a7ad" stroke-width="1.5"/></svg>
<div class="abs" style="left:773px;top:425.5px;width:306px;height:26.56px;background:#fff"></div>
<div class="abs row" style="left:785px;top:432.7px">4.</div>
<svg class="abs" style="left:804px;top:434.0px" width="10" height="10" viewBox="0 0 10 10"><rect x="0.5" y="0.5" width="9" height="9" fill="#4aa8d8"/><text x="5" y="7" font-size="4.5" font-weight="bold" text-anchor="middle" fill="#fff">wp</text></svg>
<div class="abs row" style="left:820.5px;top:432.7px">isitwp.com</div>
<svg class="abs" style="left:1058px;top:435.5px" width="9" height="6" viewBox="0 0 9 6"><path d="M0.8 0.8 L4.5 4.6 L8.2 0.8" fill="none" stroke="#a3a7ad" stroke-width="1.5"/></svg>
<div class="abs" style="left:773px;top:452.0px;width:306px;height:26.56px;background:#fafbfe"></div>
<div class="abs row" style="left:785px;top:459.2px">5.</div>
<svg class="abs" style="left:804px;top:460.5px" width="10" height="10" viewBox="0 0 10 10"><text x="5" y="8.4" font-size="9.5" font-weight="bold" text-anchor="middle" fill="#2d8fc4">m</text></svg>
<div class="abs row" style="left:820.5px;top:459.2px">docs.memberpress.com</div>
<svg class="abs" style="left:1058px;top:462.0px" width="9" height="6" viewBox="0 0 9 6"><path d="M0.8 0.8 L4.5 4.6 L8.2 0.8" fill="none" stroke="#a3a7ad" stroke-width="1.5"/></svg>
<div class="abs" style="left:773px;top:478.6px;width:306px;height:26.56px;background:#fff"></div>
<div class="abs row" style="left:785px;top:485.8px">6.</div>
<svg class="abs" style="left:804px;top:487.1px" width="10" height="10" viewBox="0 0 10 10"><path d="M0.8 0.8 L5 4.2 L9.2 0.8 V9.2 H6.4 V6.2 H3.6 V9.2 H0.8 Z" fill="#111"/></svg>
<div class="abs row" style="left:820.5px;top:485.8px">machothemes.com</div>
<svg class="abs" style="left:1058px;top:488.6px" width="9" height="6" viewBox="0 0 9 6"><path d="M0.8 0.8 L4.5 4.6 L8.2 0.8" fill="none" stroke="#a3a7ad" stroke-width="1.5"/></svg>
<div class="abs" style="left:773px;top:505.2px;width:306px;height:26.56px;background:#fafbfe"></div>
<div class="abs row" style="left:785px;top:512.4px">7.</div>
<svg class="abs" style="left:804px;top:513.7px" width="10" height="10" viewBox="0 0 10 10"><path d="M5 0.6 L6.4 3.6 L9.6 4 L7.2 6.2 L7.9 9.4 L5 7.8 L2.1 9.4 L2.8 6.2 L0.4 4 L3.6 3.6 Z" fill="#f5a623"/></svg>
<div class="abs row" style="left:823.4px;top:512.4px">shareasale-analytics.com</div>
<svg class="abs" style="left:1058px;top:515.2px" width="9" height="6" viewBox="0 0 9 6"><path d="M0.8 0.8 L4.5 4.6 L8.2 0.8" fill="none" stroke="#a3a7ad" stroke-width="1.5"/></svg>
<div class="abs" style="left:773px;top:531.7px;width:306px;height:26.56px;background:#fff"></div>
<div class="abs row" style="left:785px;top:538.9px">8.</div>
<svg class="abs" style="left:804px;top:540.2px" width="10" height="10" viewBox="0 0 10 10"><rect x="0.5" y="0.5" width="9" height="9" fill="#222"/><path d="M3 2 L5 4 L7 2 M5 4 V7 M3.2 8.5 L5 7 L6.8 8.5" stroke="#fff" stroke-width="1" fill="none"/></svg>
<div class="abs row" style="left:820.5px;top:538.9px">stickmancommunications.co.uk</div>
<svg class="abs" style="left:1058px;top:541.7px" width="9" height="6" viewBox="0 0 9 6"><path d="M0.8 0.8 L4.5 4.6 L8.2 0.8" fill="none" stroke="#a3a7ad" stroke-width="1.5"/></svg>
<div class="abs" style="left:773px;top:558.3px;width:306px;height:26.56px;background:#fafbfe"></div>
<div class="abs row" style="left:785px;top:565.5px">9.</div>
<svg class="abs" style="left:804px;top:566.8px" width="10" height="10" viewBox="0 0 10 10"><ellipse cx="5" cy="5" rx="3.6" ry="4.4" fill="#e98a2b"/><rect x="4.4" y="0.8" width="1.2" height="8.4" fill="#7a3d0b"/></svg>
<div class="abs row" style="left:820.5px;top:565.5px">mindsuppliers.com</div>
<svg class="abs" style="left:1058px;top:568.3px" width="9" height="6" viewBox="0 0 9 6"><path d="M0.8 0.8 L4.5 4.6 L8.2 0.8" fill="none" stroke="#a3a7ad" stroke-width="1.5"/></svg>
<div class="abs" style="left:773px;top:584.8px;width:306px;height:26.56px;background:#fff"></div>
<div class="abs row" style="left:785px;top:592.0px">10.</div>
<svg class="abs" style="left:804px;top:593.3px" width="10" height="10" viewBox="0 0 10 10"><circle cx="5" cy="5" r="4" fill="#cfd8e3" stroke="#8a97a6" stroke-width="0.8"/><path d="M3 3 Q5 5 3.5 7.5" stroke="#8a97a6" stroke-width="0.8" fill="none"/></svg>
<div class="abs row" style="left:820.5px;top:592.0px">workforcexl.co</div>
<svg class="abs" style="left:1058px;top:594.8px" width="9" height="6" viewBox="0 0 9 6"><path d="M0.8 0.8 L4.5 4.6 L8.2 0.8" fill="none" stroke="#a3a7ad" stroke-width="1.5"/></svg>
<div class="abs" style="left:785px;top:623px;width:282px;height:25.5px;background:#4f9de0;border-radius:2px;box-sizing:border-box;border-bottom:1px solid #3f8bd0"></div>
<div class="abs" style="left:785px;top:630.8px;width:282px;text-align:center;font-size:8.7px;color:#fff;white-space:nowrap">View Top Conversions Sources Report</div>
</div>
</body></html>
